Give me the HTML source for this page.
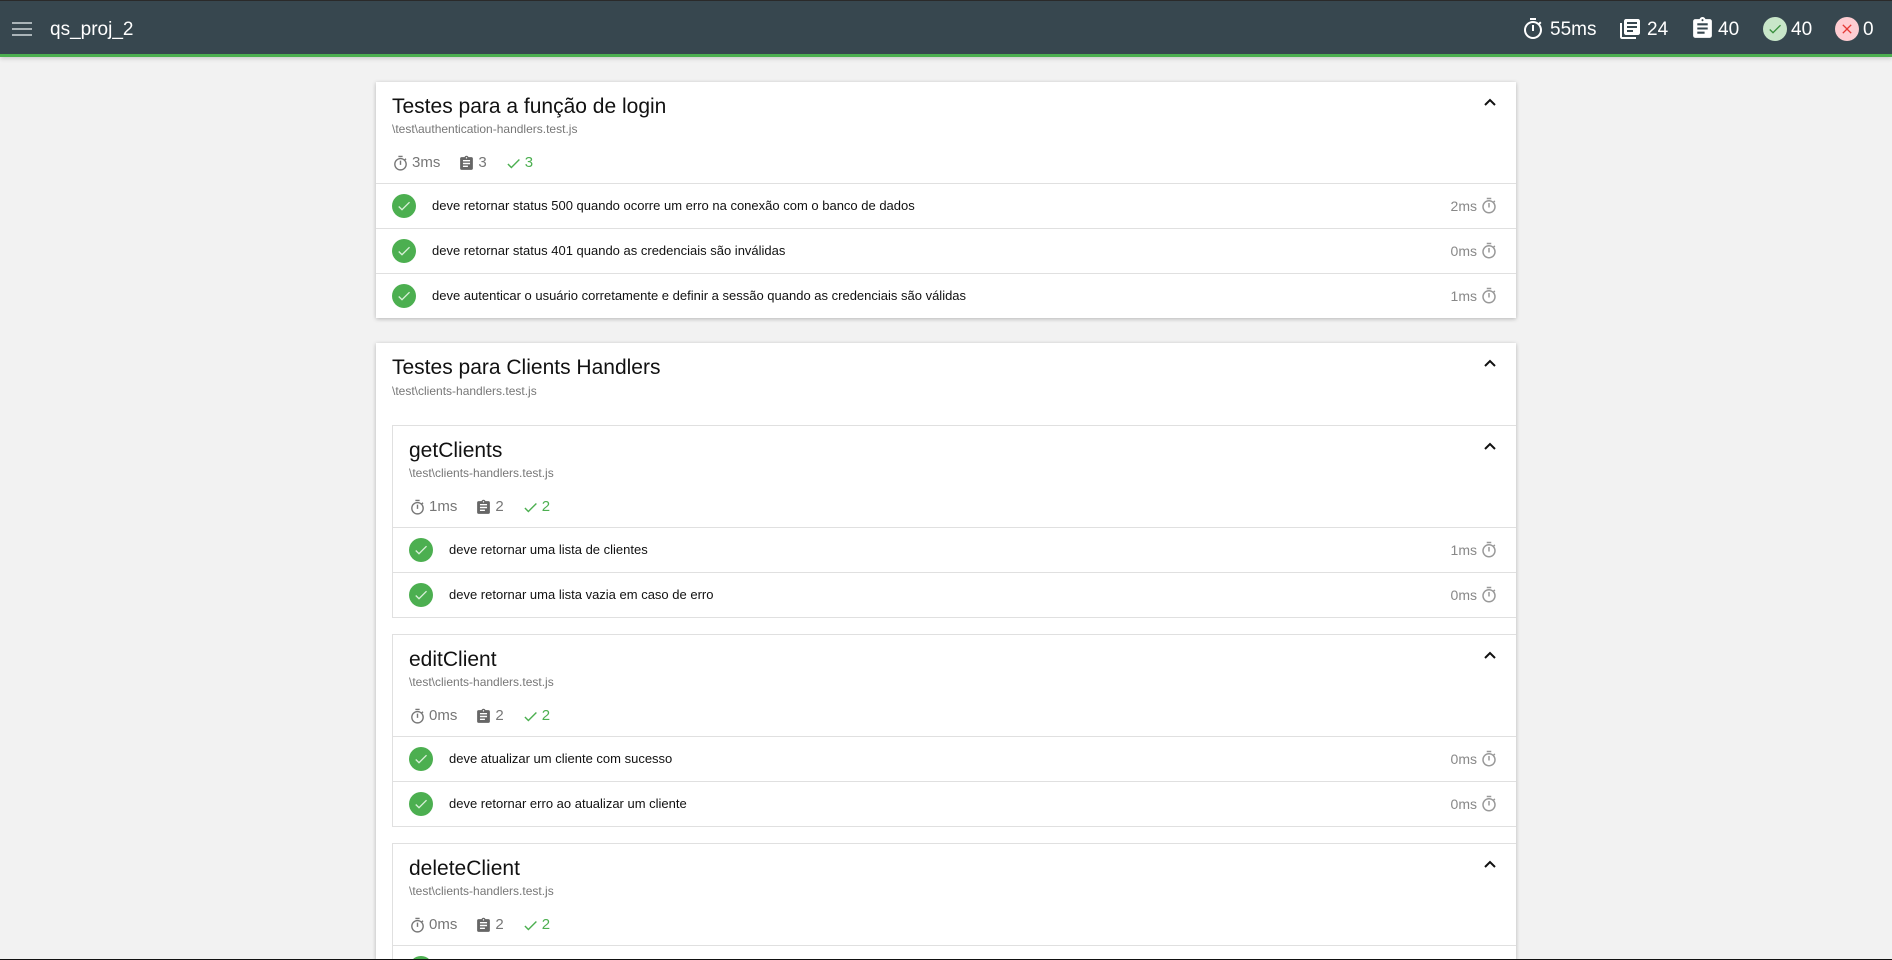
<!DOCTYPE html>
<html style="overflow:hidden;height:960px"><head><meta charset="utf-8">
<style>
*{box-sizing:border-box;margin:0;padding:0}
body{width:1892px;height:960px;overflow:hidden;background:#f2f2f2;font-family:"Liberation Sans",Arial,sans-serif;position:relative}
.hdr{position:absolute;left:0;top:0;width:1892px;height:57px;background:#37474f;border-top:1px solid #2a2a2a;border-bottom:3px solid #4caf50;box-shadow:0 2px 4px rgba(0,0,0,.15)}
.ha{position:absolute;color:#fff;font-size:19px;top:18px;line-height:22px}
.hi{position:absolute;top:16px}
.card{position:absolute;left:376px;width:1140px;background:#fff;box-shadow:0 1px 4px rgba(0,0,0,.25);overflow:hidden}
.head{position:relative;height:101px}
.t{position:absolute;left:16px;top:12px;font-size:21px;color:#111;line-height:26px}
.p{position:absolute;left:16px;top:40px;font-size:12px;color:#777;line-height:15px}
.s{position:absolute;left:16px;top:71px;font-size:15px;color:#777;line-height:20px;display:flex;align-items:center}
.s svg{margin-right:3px}
.s .g{color:#4caf50}
.chev{position:absolute;right:19px;top:16px}
.row{position:relative;height:45px;border-top:1px solid #e0e0e0}
.row .c{position:absolute;left:16px;top:10px;width:24px;height:24px;border-radius:50%;background:#4caf50}
.row .c svg{position:absolute;left:4px;top:4px}
.row .x{position:absolute;left:56px;top:14px;font-size:13px;color:#111;line-height:16px}
.row .d{position:absolute;right:39px;top:13px;font-size:14px;color:#888;line-height:18px}
.row .w{position:absolute;right:18px;top:13px}
.inner{position:relative;margin-left:16px;border:1px solid #e0e0e0;border-right:none;margin-bottom:16px;background:#fff}
.inner .head{height:101px}
</style></head><body>
<div class="hdr">
<svg style="position:absolute;left:12px;top:21px" width="20" height="14" viewBox="0 0 20 14"><rect y="0" width="20" height="2" fill="#aab4b8"/><rect y="6" width="20" height="2" fill="#aab4b8"/><rect y="12" width="20" height="2" fill="#aab4b8"/></svg>
<div class="ha" style="left:50px">qs_proj_2</div>
<svg class="hi" style="left:1521px;top:16px" width="24" height="24" viewBox="0 0 24 24"><path fill="#fff" d="M15 1H9v2h6V1zm-4 13h2V8h-2v6zm8.03-6.61l1.42-1.42c-.43-.51-.9-.99-1.41-1.41l-1.42 1.42C16.07 4.74 14.12 4 12 4c-4.97 0-9 4.03-9 9s4.02 9 9 9 9-4.03 9-9c0-2.12-.74-4.07-1.97-5.61zM12 20c-3.87 0-7-3.13-7-7s3.13-7 7-7 7 3.13 7 7-3.13 7-7 7z"/></svg>
<div class="ha" style="left:1550px">55ms</div>
<svg class="hi" style="left:1618px;top:16px" width="24" height="24" viewBox="0 0 24 24"><path fill="#fff" d="M4 6H2v14c0 1.1.9 2 2 2h14v-2H4V6zm16-4H8c-1.1 0-2 .9-2 2v12c0 1.1.9 2 2 2h12c1.1 0 2-.9 2-2V4c0-1.1-.9-2-2-2zm-1 9H9V9h10v2zm-4 4H9v-2h6v2zm4-8H9V5h10v2z"/></svg>
<div class="ha" style="left:1647px">24</div>
<svg class="hi" style="left:1690px;top:15px" width="25" height="25" viewBox="0 0 24 24"><path fill="#fff" d="M19 3h-4.18C14.4 1.84 13.3 1 12 1c-1.3 0-2.4.84-2.82 2H5c-1.1 0-2 .9-2 2v14c0 1.1.9 2 2 2h14c1.1 0 2-.9 2-2V5c0-1.1-.9-2-2-2zm-7 0c.55 0 1 .45 1 1s-.45 1-1 1-1-.45-1-1 .45-1 1-1zm2 14H7v-2h7v2zm3-4H7v-2h10v2zm0-4H7V7h10v2z"/></svg>
<div class="ha" style="left:1718px">40</div>
<div style="position:absolute;left:1763px;top:16px;width:24px;height:24px;border-radius:50%;background:#c8e6c9"><svg style="position:absolute;left:4px;top:4px" width="16" height="16" viewBox="0 0 24 24"><path fill="#388e3c" d="M9 16.17L4.83 12l-1.42 1.41L9 19 21 7l-1.41-1.41z"/></svg></div>
<div class="ha" style="left:1791px">40</div>
<div style="position:absolute;left:1835px;top:16px;width:24px;height:24px;border-radius:50%;background:#ffcdd2"><svg style="position:absolute;left:4px;top:4px" width="16" height="16" viewBox="0 0 24 24"><path fill="#e53935" d="M19 6.41L17.59 5 12 10.59 6.41 5 5 6.41 10.59 12 5 17.59 6.41 19 12 13.41 17.59 19 19 17.59 13.41 12z"/></svg></div>
<div class="ha" style="left:1863px">0</div>
</div>

<div class="card" style="top:82px;height:236px">
 <div class="head">
  <div class="t">Testes para a função de login</div>
  <div class="p">\test\authentication-handlers.test.js</div>
  <div class="s"><svg width="17" height="17" viewBox="0 0 24 24"><path fill="#777" d="M15 1H9v2h6V1zm-4 13h2V8h-2v6zm8.03-6.61l1.42-1.42c-.43-.51-.9-.99-1.41-1.41l-1.42 1.42C16.07 4.74 14.12 4 12 4c-4.97 0-9 4.03-9 9s4.02 9 9 9 9-4.03 9-9c0-2.12-.74-4.07-1.970-5.61zM12 20c-3.87 0-7-3.13-7-7s3.13-7 7-7 7 3.13 7 7-3.13 7-7 7z"/></svg><span>3ms</span><span style="width:18px"></span><svg width="17" height="17" viewBox="0 0 24 24"><path fill="#666" d="M19 3h-4.18C14.4 1.84 13.3 1 12 1c-1.3 0-2.4.84-2.82 2H5c-1.1 0-2 .9-2 2v14c0 1.1.9 2 2 2h14c1.1 0 2-.9 2-2V5c0-1.1-.9-2-2-2zm-7 0c.55 0 1 .45 1 1s-.45 1-1 1-1-.45-1-1 .45-1 1-1zm2 14H7v-2h7v2zm3-4H7v-2h10v2zm0-4H7V7h10v2z"/></svg><span>3</span><span style="width:18px"></span><svg width="17" height="17" viewBox="0 0 24 24"><path fill="#4caf50" d="M9 16.17L4.83 12l-1.42 1.41L9 19 21 7l-1.41-1.41z"/></svg><span class="g">3</span></div>
  <svg class="chev" width="14" height="10" viewBox="0 0 14 10"><path d="M2 7l5-5 5 5" stroke="#111" stroke-width="2" fill="none"/></svg>
 </div>
 <div class="row"><div class="c"><svg width="16" height="16" viewBox="0 0 24 24"><path fill="#d8f0d8" d="M9 16.17L4.83 12l-1.42 1.41L9 19 21 7l-1.41-1.41z"/></svg></div><div class="x">deve retornar status 500 quando ocorre um erro na conexão com o banco de dados</div><div class="d">2ms</div><svg class="w" width="18" height="18" viewBox="0 0 24 24"><path fill="#999" d="M15 1H9v2h6V1zm-4 13h2V8h-2v6zm8.03-6.61l1.42-1.42c-.43-.51-.9-.99-1.41-1.41l-1.42 1.42C16.07 4.74 14.12 4 12 4c-4.97 0-9 4.03-9 9s4.02 9 9 9 9-4.03 9-9c0-2.12-.74-4.07-1.97-5.61zM12 20c-3.87 0-7-3.13-7-7s3.13-7 7-7 7 3.13 7 7-3.13 7-7 7z"/></svg></div>
 <div class="row"><div class="c"><svg width="16" height="16" viewBox="0 0 24 24"><path fill="#d8f0d8" d="M9 16.17L4.83 12l-1.42 1.41L9 19 21 7l-1.41-1.41z"/></svg></div><div class="x">deve retornar status 401 quando as credenciais são inválidas</div><div class="d">0ms</div><svg class="w" width="18" height="18" viewBox="0 0 24 24"><path fill="#999" d="M15 1H9v2h6V1zm-4 13h2V8h-2v6zm8.03-6.61l1.42-1.42c-.43-.51-.9-.99-1.41-1.41l-1.42 1.42C16.07 4.74 14.12 4 12 4c-4.97 0-9 4.03-9 9s4.02 9 9 9 9-4.03 9-9c0-2.12-.74-4.07-1.97-5.61zM12 20c-3.87 0-7-3.13-7-7s3.13-7 7-7 7 3.13 7 7-3.13 7-7 7z"/></svg></div>
 <div class="row"><div class="c"><svg width="16" height="16" viewBox="0 0 24 24"><path fill="#d8f0d8" d="M9 16.17L4.83 12l-1.42 1.41L9 19 21 7l-1.41-1.41z"/></svg></div><div class="x">deve autenticar o usuário corretamente e definir a sessão quando as credenciais são válidas</div><div class="d">1ms</div><svg class="w" width="18" height="18" viewBox="0 0 24 24"><path fill="#999" d="M15 1H9v2h6V1zm-4 13h2V8h-2v6zm8.03-6.61l1.42-1.42c-.43-.51-.9-.99-1.41-1.41l-1.42 1.42C16.07 4.74 14.12 4 12 4c-4.97 0-9 4.03-9 9s4.02 9 9 9 9-4.03 9-9c0-2.12-.74-4.07-1.97-5.61zM12 20c-3.87 0-7-3.13-7-7s3.13-7 7-7 7 3.13 7 7-3.13 7-7 7z"/></svg></div>
</div>

<div class="card" style="top:343px;height:617px">
 <div style="position:relative;height:82px">
  <div class="t">Testes para Clients Handlers</div>
  <div class="p" style="top:41px">\test\clients-handlers.test.js</div>
  <svg class="chev" width="14" height="10" viewBox="0 0 14 10"><path d="M2 7l5-5 5 5" stroke="#111" stroke-width="2" fill="none"/></svg>
 </div>

 <div class="inner">
  <div class="head">
   <div class="t">getClients</div>
   <div class="p">\test\clients-handlers.test.js</div>
   <div class="s"><svg width="17" height="17" viewBox="0 0 24 24"><path fill="#777" d="M15 1H9v2h6V1zm-4 13h2V8h-2v6zm8.03-6.61l1.42-1.42c-.43-.51-.9-.99-1.41-1.41l-1.42 1.42C16.07 4.74 14.12 4 12 4c-4.97 0-9 4.03-9 9s4.02 9 9 9 9-4.03 9-9c0-2.12-.74-4.07-1.97-5.61zM12 20c-3.87 0-7-3.13-7-7s3.13-7 7-7 7 3.13 7 7-3.13 7-7 7z"/></svg><span>1ms</span><span style="width:18px"></span><svg width="17" height="17" viewBox="0 0 24 24"><path fill="#666" d="M19 3h-4.18C14.4 1.84 13.3 1 12 1c-1.3 0-2.4.84-2.82 2H5c-1.1 0-2 .9-2 2v14c0 1.1.9 2 2 2h14c1.1 0 2-.9 2-2V5c0-1.1-.9-2-2-2zm-7 0c.55 0 1 .45 1 1s-.45 1-1 1-1-.45-1-1 .45-1 1-1zm2 14H7v-2h7v2zm3-4H7v-2h10v2zm0-4H7V7h10v2z"/></svg><span>2</span><span style="width:18px"></span><svg width="17" height="17" viewBox="0 0 24 24"><path fill="#4caf50" d="M9 16.17L4.83 12l-1.42 1.41L9 19 21 7l-1.41-1.41z"/></svg><span class="g">2</span></div>
   <svg class="chev" width="14" height="10" viewBox="0 0 14 10"><path d="M2 7l5-5 5 5" stroke="#111" stroke-width="2" fill="none"/></svg>
  </div>
  <div class="row"><div class="c"><svg width="16" height="16" viewBox="0 0 24 24"><path fill="#d8f0d8" d="M9 16.17L4.83 12l-1.42 1.41L9 19 21 7l-1.41-1.41z"/></svg></div><div class="x">deve retornar uma lista de clientes</div><div class="d">1ms</div><svg class="w" width="18" height="18" viewBox="0 0 24 24"><path fill="#999" d="M15 1H9v2h6V1zm-4 13h2V8h-2v6zm8.03-6.61l1.42-1.42c-.43-.51-.9-.99-1.41-1.41l-1.42 1.42C16.07 4.74 14.12 4 12 4c-4.97 0-9 4.03-9 9s4.02 9 9 9 9-4.03 9-9c0-2.12-.74-4.07-1.97-5.61zM12 20c-3.87 0-7-3.13-7-7s3.13-7 7-7 7 3.13 7 7-3.13 7-7 7z"/></svg></div>
  <div class="row"><div class="c"><svg width="16" height="16" viewBox="0 0 24 24"><path fill="#d8f0d8" d="M9 16.17L4.83 12l-1.42 1.41L9 19 21 7l-1.41-1.41z"/></svg></div><div class="x">deve retornar uma lista vazia em caso de erro</div><div class="d">0ms</div><svg class="w" width="18" height="18" viewBox="0 0 24 24"><path fill="#999" d="M15 1H9v2h6V1zm-4 13h2V8h-2v6zm8.03-6.61l1.42-1.42c-.43-.51-.9-.99-1.41-1.41l-1.42 1.42C16.07 4.74 14.12 4 12 4c-4.97 0-9 4.03-9 9s4.02 9 9 9 9-4.03 9-9c0-2.12-.74-4.07-1.97-5.61zM12 20c-3.87 0-7-3.13-7-7s3.13-7 7-7 7 3.13 7 7-3.13 7-7 7z"/></svg></div>
 </div>

 <div class="inner">
  <div class="head">
   <div class="t">editClient</div>
   <div class="p">\test\clients-handlers.test.js</div>
   <div class="s"><svg width="17" height="17" viewBox="0 0 24 24"><path fill="#777" d="M15 1H9v2h6V1zm-4 13h2V8h-2v6zm8.03-6.61l1.42-1.42c-.43-.51-.9-.99-1.41-1.41l-1.42 1.42C16.07 4.74 14.12 4 12 4c-4.97 0-9 4.03-9 9s4.02 9 9 9 9-4.03 9-9c0-2.12-.74-4.07-1.97-5.61zM12 20c-3.87 0-7-3.13-7-7s3.13-7 7-7 7 3.13 7 7-3.13 7-7 7z"/></svg><span>0ms</span><span style="width:18px"></span><svg width="17" height="17" viewBox="0 0 24 24"><path fill="#666" d="M19 3h-4.18C14.4 1.84 13.3 1 12 1c-1.3 0-2.4.84-2.82 2H5c-1.1 0-2 .9-2 2v14c0 1.1.9 2 2 2h14c1.1 0 2-.9 2-2V5c0-1.1-.9-2-2-2zm-7 0c.55 0 1 .45 1 1s-.45 1-1 1-1-.45-1-1 .45-1 1-1zm2 14H7v-2h7v2zm3-4H7v-2h10v2zm0-4H7V7h10v2z"/></svg><span>2</span><span style="width:18px"></span><svg width="17" height="17" viewBox="0 0 24 24"><path fill="#4caf50" d="M9 16.17L4.83 12l-1.42 1.41L9 19 21 7l-1.41-1.41z"/></svg><span class="g">2</span></div>
   <svg class="chev" width="14" height="10" viewBox="0 0 14 10"><path d="M2 7l5-5 5 5" stroke="#111" stroke-width="2" fill="none"/></svg>
  </div>
  <div class="row"><div class="c"><svg width="16" height="16" viewBox="0 0 24 24"><path fill="#d8f0d8" d="M9 16.17L4.83 12l-1.42 1.41L9 19 21 7l-1.41-1.41z"/></svg></div><div class="x">deve atualizar um cliente com sucesso</div><div class="d">0ms</div><svg class="w" width="18" height="18" viewBox="0 0 24 24"><path fill="#999" d="M15 1H9v2h6V1zm-4 13h2V8h-2v6zm8.03-6.61l1.42-1.42c-.43-.51-.9-.99-1.41-1.41l-1.42 1.42C16.07 4.74 14.12 4 12 4c-4.97 0-9 4.03-9 9s4.02 9 9 9 9-4.03 9-9c0-2.12-.74-4.07-1.97-5.61zM12 20c-3.87 0-7-3.13-7-7s3.13-7 7-7 7 3.13 7 7-3.13 7-7 7z"/></svg></div>
  <div class="row"><div class="c"><svg width="16" height="16" viewBox="0 0 24 24"><path fill="#d8f0d8" d="M9 16.17L4.83 12l-1.42 1.41L9 19 21 7l-1.41-1.41z"/></svg></div><div class="x">deve retornar erro ao atualizar um cliente</div><div class="d">0ms</div><svg class="w" width="18" height="18" viewBox="0 0 24 24"><path fill="#999" d="M15 1H9v2h6V1zm-4 13h2V8h-2v6zm8.03-6.61l1.42-1.42c-.43-.51-.9-.99-1.41-1.41l-1.42 1.42C16.07 4.74 14.12 4 12 4c-4.97 0-9 4.03-9 9s4.02 9 9 9 9-4.03 9-9c0-2.12-.74-4.07-1.97-5.61zM12 20c-3.87 0-7-3.13-7-7s3.13-7 7-7 7 3.13 7 7-3.13 7-7 7z"/></svg></div>
 </div>

 <div class="inner">
  <div class="head">
   <div class="t">deleteClient</div>
   <div class="p">\test\clients-handlers.test.js</div>
   <div class="s"><svg width="17" height="17" viewBox="0 0 24 24"><path fill="#777" d="M15 1H9v2h6V1zm-4 13h2V8h-2v6zm8.03-6.61l1.42-1.42c-.43-.51-.9-.99-1.41-1.41l-1.42 1.42C16.07 4.74 14.12 4 12 4c-4.97 0-9 4.03-9 9s4.02 9 9 9 9-4.03 9-9c0-2.12-.74-4.07-1.97-5.61zM12 20c-3.87 0-7-3.13-7-7s3.13-7 7-7 7 3.13 7 7-3.13 7-7 7z"/></svg><span>0ms</span><span style="width:18px"></span><svg width="17" height="17" viewBox="0 0 24 24"><path fill="#666" d="M19 3h-4.18C14.4 1.84 13.3 1 12 1c-1.3 0-2.4.84-2.82 2H5c-1.1 0-2 .9-2 2v14c0 1.1.9 2 2 2h14c1.1 0 2-.9 2-2V5c0-1.1-.9-2-2-2zm-7 0c.55 0 1 .45 1 1s-.45 1-1 1-1-.45-1-1 .45-1 1-1zm2 14H7v-2h7v2zm3-4H7v-2h10v2zm0-4H7V7h10v2z"/></svg><span>2</span><span style="width:18px"></span><svg width="17" height="17" viewBox="0 0 24 24"><path fill="#4caf50" d="M9 16.17L4.83 12l-1.42 1.41L9 19 21 7l-1.41-1.41z"/></svg><span class="g">2</span></div>
   <svg class="chev" width="14" height="10" viewBox="0 0 14 10"><path d="M2 7l5-5 5 5" stroke="#111" stroke-width="2" fill="none"/></svg>
  </div>
  <div class="row"><div class="c"></div></div>
 </div>
</div>
<div style="position:absolute;left:0;top:959px;width:1892px;height:1px;background:#111"></div>
</body></html>
